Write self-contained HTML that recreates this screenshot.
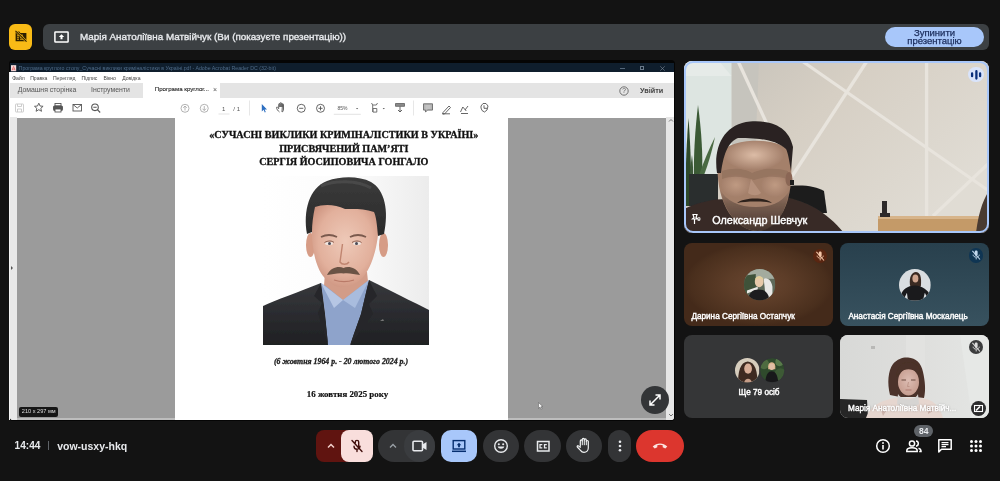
<!DOCTYPE html>
<html><head><meta charset="utf-8">
<style>
*{margin:0;padding:0;box-sizing:border-box}
html,body{width:1000px;height:481px;overflow:hidden;background:#131313;font-family:"Liberation Sans",sans-serif;position:relative}
.abs{position:absolute}
.nw{white-space:nowrap}
#ybox{left:9px;top:23.6px;width:23.3px;height:26.2px;background:#f9bb16;border-radius:6px}
#topbar{left:42.8px;top:24px;width:946.5px;height:25.5px;background:#3c4043;border-radius:6px}
#toptext{left:80px;top:31.3px;font-size:9.85px;color:#e8eaed;font-weight:normal;-webkit-text-stroke:0.35px #e8eaed;line-height:12px}
#stopbtn{left:885px;top:27px;width:99px;height:20px;background:#a8c7fa;border-radius:10px;color:#1b2d5c;-webkit-text-stroke:0.25px #1b2d5c;font-size:9.5px;line-height:8.6px;text-align:center;padding-top:1.5px}
#pdf{left:10px;top:61px;width:664px;height:359px;background:#fff;overflow:hidden;border-radius:0 0 3px 3px}
#pframe{left:8.5px;top:60.2px;width:666.5px;height:361px;background:#050505;border-radius:4px}
#ptitle{left:0;top:2.4px;width:664px;height:8.7px;background:#0f1e2d}
#ptabs{left:0;top:22px;width:664px;height:15px;background:#e4e4e4}
#ptool{left:0;top:37px;width:664px;height:19.5px;background:#fff}
#pgray{left:7px;top:56.5px;width:649px;height:303px;background:#9b9b9b}
#page{left:165px;top:56.5px;width:333px;height:303px;background:#fff}
#lstrip{left:0;top:56px;width:7px;height:303px;background:#e8e8e8}
#rstrip{left:656px;top:56px;width:8px;height:303px;background:#e6e6e6}
.tile{position:absolute;border-radius:8px;overflow:hidden}
#t1{left:684px;top:61px;width:305px;height:172px;background:#d9d6cf}
#t1b{left:684px;top:61px;width:305px;height:172px;border:2px solid #a8c7fa;border-radius:9px}
#t2{left:684px;top:243px;width:149px;height:83px;background:radial-gradient(ellipse closest-side at 50% 50%,#684530 0%,#5d3d28 40%,#4a2f1d 90%,#442a1a 100%)}
#t3{left:840px;top:243px;width:149px;height:83px;background:linear-gradient(#28404d,#38525f)}
#t4{left:684px;top:334.5px;width:149px;height:83px;background:#353637}
#t5{left:840px;top:334.5px;width:149px;height:83px;background:#dcdcda}
.bbtn{position:absolute;top:430px;height:32px;border-radius:16px;background:#333436}
.name{position:absolute;color:#fff;font-weight:normal;-webkit-text-stroke:0.4px #fff;white-space:nowrap}
.menu span{position:absolute;top:0;font-size:5.1px;color:#444}
svg{position:absolute;overflow:visible}
#root{position:absolute;left:0;top:0;width:1000px;height:481px;will-change:transform;overflow:hidden}
</style></head><body><div id="root">
<div class="abs" id="ybox"></div>
<svg style="left:14.5px;top:29.5px" width="12" height="12" viewBox="0 0 12 12">
  <path d="M0.6 1.6h3.6l1.2 1.3h6v8.4H0.6z" fill="#2b1f00"/>
  <path d="M2 5.2h2M5 5.2h3M2 7.2h2M5 7.2h3.5M2 9.2h2M5 9.2h3.5" stroke="#f9bb16" stroke-width="0.9"/>
  <path d="M0.5 0.8L11.5 11.6" stroke="#f9bb16" stroke-width="2.2"/>
  <path d="M0.5 0.8L11.5 11.6" stroke="#2b1f00" stroke-width="1.1"/>
</svg>
<div class="abs" id="topbar"></div>
<svg style="left:53.5px;top:30.5px" width="15" height="12" viewBox="0 0 15 12">
  <rect x="0.9" y="0.9" width="13.2" height="10.2" fill="none" stroke="#fff" stroke-width="1.5" rx="0.6"/>
  <path d="M7.5 3.2L10.2 6H8.5v2.3h-2V6H4.8z" fill="#fff"/>
</svg>
<div class="abs nw" id="toptext">Марія Анатоліївна Матвійчук (Ви (показуєте презентацію))</div>
<div class="abs nw" id="stopbtn">Зупинити<br>презентацію</div>

<div class="abs" id="pframe"></div>
<div class="abs" style="left:9px;top:72px;width:1px;height:348px;background:#f4f4f4"></div>
<div class="abs" id="pdf">
  <div class="abs" style="left:0;top:0;width:664px;height:2.4px;background:#050505"></div>
  <div class="abs" id="ptitle"></div>
  <svg style="left:0.8px;top:3.8px" width="5.2" height="6.4" viewBox="0 0 6 7"><rect width="6" height="7" fill="#f4dcdc"/><path d="M1.2 6L3 1.5L4.8 6M1.5 4.6h3" stroke="#d33" stroke-width="0.6" fill="none"/></svg>
  <div class="abs nw" style="left:8.6px;top:4px;font-size:5.28px;color:#4f6b88;line-height:6px">Програма круглого столу_Сучасні виклики криміналістики в Україні.pdf - Adobe Acrobat Reader DC (32-bit)</div>
  <div class="abs" style="left:609.5px;top:7px;width:5px;height:0.6px;background:#55677a"></div>
  <div class="abs" style="left:629.7px;top:4.8px;width:4.4px;height:4.4px;border:0.6px solid #6a7a8b"></div>
  <svg style="left:650px;top:4.5px" width="5" height="5" viewBox="0 0 5 5"><path d="M0.3 0.3L4.7 4.7M4.7 0.3L0.3 4.7" stroke="#7d8a98" stroke-width="0.6"/></svg>
  <div class="abs menu" style="left:0;top:13.5px;width:664px;height:7px">
    <span style="left:2.2px">Файл</span><span style="left:20.2px">Правка</span><span style="left:42.9px">Перегляд</span><span style="left:71.5px">Підпис</span><span style="left:93.5px">Вікно</span><span style="left:112.2px">Довідка</span>
  </div>
  <div class="abs" id="ptabs"></div>
  <div class="abs" style="left:133px;top:22px;width:77px;height:15px;background:#fff"></div>
  <div class="abs nw" style="left:7.7px;top:23.8px;font-size:6.9px;color:#555;line-height:9px">Домашня сторінка</div>
  <div class="abs nw" style="left:81px;top:23.8px;font-size:6.9px;color:#555;line-height:9px">Інструменти</div>
  <div class="abs nw" style="left:144.8px;top:24.3px;font-size:6.1px;color:#222;-webkit-text-stroke:0.1px #222;line-height:8px">Програма круглог...</div>
  <div class="abs nw" style="left:203px;top:25px;font-size:7px;color:#555;line-height:8px">×</div>
  <svg style="left:608.5px;top:24.7px" width="10" height="10" viewBox="0 0 10 10"><circle cx="5" cy="5" r="4.2" fill="none" stroke="#555" stroke-width="0.8"/><text x="5" y="7.3" font-size="6.5" text-anchor="middle" fill="#555" font-family="Liberation Sans">?</text></svg>
  <div class="abs nw" style="left:630px;top:25.5px;font-size:7.25px;color:#444;font-weight:bold;line-height:8px">Увійти</div>
  <div class="abs" id="ptool"></div>
  <!-- toolbar icons -->
  <svg style="left:0;top:36.8px" width="664" height="20" viewBox="0 0 664 20">
    <g fill="none" stroke-width="0.9">
      <g stroke="#c8c8c8"><rect x="5.5" y="6" width="8" height="8" rx="0.5"/><path d="M7.5 6v2.5h4V6M7.5 14v-3h4v3"/></g>
      <path d="M28.8 5.2l1.3 2.8 3 .3-2.3 2 .7 3-2.7-1.6-2.7 1.6.7-3-2.3-2 3-.3z" stroke="#555"/>
      <g stroke="#555"><rect x="43.5" y="8" width="9" height="4.5" rx="0.8" fill="#555"/><rect x="45" y="5.5" width="6" height="2.5"/><rect x="45" y="11" width="6" height="3" fill="#fff"/></g>
      <g stroke="#555"><rect x="63" y="6.5" width="8.5" height="6.5"/><path d="M63 6.5l4.25 3.5 4.25-3.5"/></g>
      <g stroke="#555" stroke-width="1.1"><circle cx="85" cy="9.3" r="3.3"/><path d="M87.4 11.7l2.8 2.8M83.3 9.3h3.4"/></g>
      <g stroke="#aaa"><circle cx="175" cy="10.3" r="4"/><path d="M175 12.5v-4.5M173.2 9.8l1.8-1.8 1.8 1.8"/></g>
      <g stroke="#aaa"><circle cx="194.25" cy="10.3" r="4"/><path d="M194.25 8v4.5M192.45 10.7l1.8 1.8 1.8-1.8"/></g>
      <path d="M208.5 16h11" stroke="#e0e0e0"/>
      <path d="M239.5 2.5v15M403.5 2.5v15" stroke="#e4e4e4"/>
    </g>
    <text x="212" y="12.5" font-size="6" fill="#555" font-family="Liberation Sans">1</text>
    <text x="223.3" y="12.5" font-size="6" fill="#555" font-family="Liberation Sans">/ 1</text>
    <path d="M251.8 6v7.5l1.8-1.7 1.2 2.6 1-.45-1.2-2.5h2.4z" fill="#2d6fc1"/>
    <g fill="none" stroke="#555" stroke-width="0.9">
      <path d="M269.5 14c-1.5-1-3-3-3-4.5 0-.6.9-.6 1.3 0l.9 1.2V6.3c0-.9 1.2-.9 1.2 0V9M269.9 9V5.4c0-.9 1.2-.9 1.2 0V9M271.1 9V5.8c0-.9 1.2-.9 1.2 0V9M272.3 9V6.5c0-.9 1.2-.9 1.2 0v4.5c0 2-1 3-1.5 3z"/>
      <circle cx="291.25" cy="10.3" r="4"/><path d="M289.2 10.3h4.1"/>
      <circle cx="310.5" cy="10.3" r="4"/><path d="M308.4 10.3h4.2M310.5 8.2v4.2"/>
      <path d="M323.8 16.3h27" stroke="#e0e0e0"/>
      <path d="M361.5 5l1.2 2h3.6l1.2-2M362.7 7v7M363 10.5h3.8v3.6H363z" stroke="#666"/>
      <path d="M385.5 5.5h9v2.8h-9z" fill="#8a8a8a" stroke="#6a6a6a"/><path d="M390 8.5v5.5M388 12l2 2 2-2"/>
      <path d="M413.5 5.8h9v6.3h-5l-2 2v-2h-2z" fill="#b5b5b5" stroke="#6a6a6a"/><path d="M415.5 8h5M415.5 10h5" stroke="#e0e0e0" stroke-width="0.6"/>
      <path d="M433 14.5l6-6.5 1.5 1.5-6 6.5h-1.5zM432 15.8h8" />
      <path d="M450.5 14l2.3-5 3.5 4M451 15.5h7M455 12l3-4" />
      <path d="M471 8l2-2.5h3l2 2.5-1 4-2.5 2-2.5-1.5-1-2.5zM474 7.3v3h3"/>
    </g>
    <text x="327.5" y="12.3" font-size="5" fill="#555" font-family="Liberation Sans">85%</text>
    <path d="M346 10h2.2l-1.1 1.2z" fill="#555"/>
    <path d="M372.7 10h2.2l-1.1 1.2z" fill="#555"/>
  </svg>
  <div class="abs" id="lstrip"></div>
  <div class="abs" id="pgray"></div>
  <div class="abs" id="page"></div>
  <div class="abs" id="rstrip"></div>
  <div class="abs" style="left:7px;top:357px;width:158px;height:1.5px;background:#bdbdbd"></div>
  <div class="abs" style="left:498px;top:357px;width:158px;height:1.5px;background:#bdbdbd"></div>
  <div class="abs" style="left:1px;top:205px;width:0;height:0;border-left:2.5px solid #555;border-top:2.5px solid transparent;border-bottom:2.5px solid transparent"></div>
  <div class="abs nw" style="left:9.4px;top:345.9px;height:9.7px;width:38.7px;background:#161616;border-radius:2px;color:#ddd;font-size:5.6px;line-height:9.7px;text-align:center">210 x 297 мм</div>
  <svg style="left:657px;top:56px" width="8" height="303" viewBox="0 0 8 303"><path d="M2 4.5l2-2 2 2M2 297l2 2 2-2" fill="none" stroke="#555" stroke-width="0.8"/></svg>
  <!-- page content -->
  <div class="abs nw" style="left:165px;top:67.45px;width:333px;text-align:center;font-family:'Liberation Serif',serif;font-weight:bold;font-size:10.15px;line-height:13.1px;color:#111;-webkit-text-stroke:0.3px #111;padding-left:4.6px">«СУЧАСНІ ВИКЛИКИ КРИМІНАЛІСТИКИ В УКРАЇНІ»<br>ПРИСВЯЧЕНИЙ ПАМ’ЯТІ<br>СЕРГІЯ ЙОСИПОВИЧА ГОНГАЛО</div>
  <div class="abs nw" style="left:162.7px;top:295.5px;width:333px;text-align:center;font-family:'Liberation Serif',serif;font-weight:bold;font-style:italic;font-size:7.85px;line-height:10px;color:#222;-webkit-text-stroke:0.3px #222;padding-left:3.6px">(6 жовтня 1964 р. - 20 лютого 2024 р.)</div>
  <div class="abs nw" style="left:165px;top:328px;width:333px;text-align:center;font-family:'Liberation Serif',serif;font-weight:bold;font-size:8.9px;line-height:10px;color:#111;-webkit-text-stroke:0.2px #111;padding-left:12px">16 жовтня 2025 року</div>
  <svg class="abs" id="photo" style="left:253px;top:114.5px" width="166" height="169" viewBox="0 0 166 169">
    <filter id="bl2" x="-5%" y="-5%" width="110%" height="110%"><feGaussianBlur stdDeviation="0.6"/></filter>
    <g filter="url(#bl2)">
    <defs>
      <linearGradient id="pbg" x1="0" x2="1" y1="0" y2="0"><stop offset="0" stop-color="#ffffff"/><stop offset="0.55" stop-color="#fbfbfb"/><stop offset="1" stop-color="#ececec"/></linearGradient>
      <radialGradient id="face" cx="0.5" cy="0.45" r="0.62"><stop offset="0" stop-color="#eec9b8"/><stop offset="0.65" stop-color="#e2b09c"/><stop offset="1" stop-color="#c98f7b"/></radialGradient>
      <linearGradient id="suit" x1="0" x2="0" y1="0" y2="1"><stop offset="0" stop-color="#37383c"/><stop offset="1" stop-color="#1f2023"/></linearGradient>
      <linearGradient id="hairg" x1="0" x2="0" y1="0" y2="1"><stop offset="0" stop-color="#3b3b3b"/><stop offset="1" stop-color="#2a2a2a"/></linearGradient>
    </defs>
    <rect width="166" height="169" fill="url(#pbg)"/>
    <path d="M62 96 L104 96 L107 124 L60 124 Z" fill="#d29c88"/>
    <path d="M0 130 C12 124 36 116 58 107 L66 169 L0 169 Z" fill="url(#suit)"/>
    <path d="M166 134 C150 126 126 114 106 104 L87 169 L166 169 Z" fill="url(#suit)"/>
    <path d="M58 107 L64 111 L80 124 L97 111 L106 104 L98 138 L87 169 L65 169 L62 138 Z" fill="#8ea3cb"/>
    <path d="M58 107 L71 132 L80 124 Z" fill="#b6c6e4"/>
    <path d="M106 104 L92 132 L80 124 Z" fill="#a9bcde"/>
    <path d="M58 107 L51 120 L59 127 L55 137 L65 169 L62 138 Z" fill="#26272a"/>
    <path d="M106 104 L114 120 L106 128 L110 138 L87 169 L98 138 Z" fill="#26272a"/>
    <path d="M117 145 l3 -2 l1 2 z" fill="#777"/>
    <ellipse cx="47.5" cy="69" rx="4.5" ry="12" fill="#d69c86"/>
    <ellipse cx="120.5" cy="69" rx="4.5" ry="12" fill="#d69c86"/>
    <path d="M50 30 C47 55 49 85 60 100 C68 109 74 112 80 111 C87 111 94 108 101 100 C112 86 117 60 116 34 C100 30 70 26 50 30 Z" fill="url(#face)"/>
    <path d="M44 58 C40 35 46 12 64 5 C78 0 96 0 108 6 C122 14 126 35 121 58 L115 60 C114 48 113 40 111 36 C100 32 88 33 82 33 C72 28 60 28 52 31 C50 40 49 48 49 56 Z" fill="url(#hairg)"/>
    <path d="M58 10 C72 4 94 4 108 12" stroke="#5a5a5a" stroke-width="3" fill="none" opacity="0.45"/>
    <path d="M58 61 C63 58.5 69 58.5 74 61 M87 61 C92 58.5 98 58.5 103 61" stroke="#7a5a4e" stroke-width="1.8" fill="none"/>
    <ellipse cx="66" cy="67.5" rx="4" ry="1.7" fill="#f0e6e0"/><ellipse cx="94" cy="67.5" rx="4" ry="1.7" fill="#f0e6e0"/><circle cx="66.5" cy="67.5" r="1.5" fill="#4a4a55"/><circle cx="93.5" cy="67.5" r="1.5" fill="#4a4a55"/><path d="M61.5 66.5 C65 64.5 69 64.5 71 66.5 M89 66.5 C92 64.5 96 64.5 98.5 66.5" stroke="#8a5e50" stroke-width="1" fill="none"/>
    <path d="M79.5 68 L77 86 C79 89 84 89 86 86" stroke="#c08570" stroke-width="1.4" fill="none"/>
    <path d="M64 99 C68 91 76 90 80.5 92 C85 90 93 91 97 99 C91 98 85 96.5 80.5 97.5 C76 96.5 70 98 64 99 Z" fill="#6a5244"/>
    <path d="M71 104 C77 106 85 106 91 104" stroke="#b97a68" stroke-width="1.1" fill="none"/>
  </g>
  </svg>
</div>
<svg style="left:538px;top:402px" width="6" height="8" viewBox="0 0 6 8"><path d="M0.5 0.5v6l1.5-1.4 1.1 2.3 1-.5-1.1-2.2h2z" fill="#f4f4f4" stroke="#555" stroke-width="0.5"/></svg>
<div class="abs" style="left:641px;top:386px;width:28px;height:28px;border-radius:50%;background:#333537"></div>
<svg style="left:647px;top:392px" width="16" height="16" viewBox="0 0 16 16"><path d="M3 13L13 3M8.5 3H13v4.5M3 8.5V13h4.5" stroke="#fff" stroke-width="1.5" fill="none"/></svg>

<div class="tile" id="t1"><svg style="left:0;top:0" width="305" height="172" viewBox="0 0 305 172">
  <filter id="bl1" x="-5%" y="-5%" width="110%" height="110%"><feGaussianBlur stdDeviation="0.6"/></filter>
  <g filter="url(#bl1)">
  <defs>
    <linearGradient id="wall" x1="0" y1="0" x2="1" y2="0.6"><stop offset="0" stop-color="#c4c0b8"/><stop offset="0.45" stop-color="#d6cfc4"/><stop offset="1" stop-color="#e0dcd4"/></linearGradient>
    <radialGradient id="mface" cx="0.5" cy="0.35" r="0.6"><stop offset="0" stop-color="#b58f78"/><stop offset="0.6" stop-color="#9a735f"/><stop offset="1" stop-color="#6f5245"/></radialGradient>
  </defs>
  <rect width="305" height="172" fill="url(#wall)"/>
  <path d="M47.5 0 L75 0 L70 120 L47.5 120 Z" fill="#c6c4bd"/>
  <path d="M0 0 L47.5 0 L47.5 118 L0 118 Z" fill="#dde5e1"/>
  <path d="M0 0 L35 0 L47.5 15 L0 15 Z" fill="#e6ebe8"/>
  <g stroke="#e8e4dd" stroke-width="3.3" fill="none">
    <path d="M54 0 L100 100"/>
    <path d="M118 0 L305 130"/>
    <path d="M183 0 L105 120"/>
    <path d="M242.6 0 L242.6 155"/>
    <path d="M305 102 L249 155"/>
  </g>
  <!-- plant -->
  <path d="M2 145 C1 120 2 90 4.5 57 C7 90 7.5 120 7 145 Z" fill="#2f4a2c"/>
  <path d="M10 114 C9.5 95 11 70 14 44 C17.5 70 19 95 18 114 Z" fill="#3a5a35"/>
  <path d="M15 114 C20 100 25 88 31 76 C28 90 24 104 20 114 Z" fill="#4a6a42"/>
  <path d="M5 120 C6 112 7 100 8 94 C9 102 9.5 112 9 120 Z" fill="#3c5838"/>
  <path d="M5 113 L34 113 L34 145 L5 145 Z" fill="#2b2d2e"/>
  <!-- desk -->
  <path d="M194 155 L305 155 L305 172 L194 172 Z" fill="#c49a68"/>
  <path d="M194 155 L305 155 L305 158 L194 158 Z" fill="#d7b48a"/>
  <rect x="198" y="140" width="5" height="15" fill="#2e2b2a"/>
  <rect x="196" y="152" width="10" height="4" fill="#2e2b2a"/>
  <path d="M292 172 L305 172 L305 130 C298 140 294 155 292 172 Z" fill="#4a3a32"/>
  <!-- chair right -->
  <path d="M100 126 C115 123 132 125 140 130 L143 152 L100 152 Z" fill="#1e1e1f"/>
  <!-- body -->
  <path d="M0 148 C15 141 30 138 42 138 L100 136 C122 140 142 150 160 172 L0 172 Z" fill="#382c27"/>
  <!-- face -->
  <defs>
    <radialGradient id="fh" cx="0.5" cy="0.5" r="0.5"><stop offset="0" stop-color="#dcbca6" stop-opacity="1"/><stop offset="1" stop-color="#dcbca6" stop-opacity="0"/></radialGradient>
    <radialGradient id="ck" cx="0.5" cy="0.5" r="0.5"><stop offset="0" stop-color="#c29d85" stop-opacity="0.9"/><stop offset="1" stop-color="#c29d85" stop-opacity="0"/></radialGradient>
    <linearGradient id="brd" x1="0" x2="0" y1="0" y2="1"><stop offset="0" stop-color="#5a463c" stop-opacity="0"/><stop offset="0.35" stop-color="#5a463c" stop-opacity="0.6"/><stop offset="1" stop-color="#3e302a" stop-opacity="0.95"/></linearGradient>
  </defs>
  <path d="M34 96 C32 118 36 138 45 152 C53 163 63 170 74 170 C88 169 99 156 104 138 C108 124 108 106 106 92 C100 76 42 74 34 96 Z" fill="#a4806b"/>
  <ellipse cx="70" cy="94" rx="30" ry="15" fill="url(#fh)"/>
  <ellipse cx="52" cy="124" rx="15" ry="12" fill="url(#ck)"/>
  <ellipse cx="91" cy="124" rx="14" ry="12" fill="url(#ck)"/>
  <path d="M38 110 C50 106 62 108 68 112 C76 108 90 106 104 110 L104 118 C90 114 78 116 70 119 C62 116 48 114 38 118 Z" fill="#8a6a58" opacity="0.55"/>
  <path d="M67 118 L64 132 C68 135 74 135 77 132 Z" fill="#b99580" opacity="0.8"/>
  <path d="M36 128 C40 150 55 170 74 170 C92 170 102 150 106 128 C100 140 90 146 72 146 C55 146 42 140 36 128 Z" fill="url(#brd)"/>
  <path d="M53 142 C60 136 82 136 88 142 C80 140 62 140 53 142 Z" fill="#2e221d"/>
  <ellipse cx="105" cy="118" rx="3.5" ry="7" fill="#8a6654"/>
  <!-- hair -->
  <path d="M33 112 C29 86 40 63 66 60.5 C88 59 105 66 109 86 L107 110 C105 98 104 92 102 88 C92 79 76 77 54 77 C45 81 40 90 37 112 Z" fill="#2a2422"/>
  <rect x="106" y="119" width="4" height="5" fill="#1a1a1a"/>
</g>
</svg></div>
<div class="abs" id="t1b"></div>
<svg style="left:690px;top:212px" width="14" height="14" viewBox="0 0 14 14"><path d="M3 2.5h4l-1 3 1.5 1.5h-5l1.5-1.5zM4.5 7v5" stroke="#fff" stroke-width="1.2" fill="none"/><text x="7.2" y="8.5" font-size="6" fill="#fff" font-family="Liberation Sans" font-weight="bold">9</text></svg>
<div class="name" style="left:712.3px;top:214.2px;font-size:10.8px;line-height:12px">Олександр Шевчук</div>
<div class="abs" style="left:968.4px;top:66.9px;width:15.6px;height:15.6px;border-radius:50%;background:#d9e4fb"></div>
<svg style="left:968.4px;top:66.9px" width="15.6" height="15.6" viewBox="0 0 15.6 15.6"><path d="M4.1 6.4v2.8M8.4 4.2v7.4M12.1 6.4v2.8" stroke="#0b2f7a" stroke-width="2.3" stroke-linecap="round"/></svg>
<div class="tile" id="t2"></div>
<svg style="left:743.5px;top:269px" width="31.4" height="31.4" viewBox="0 0 32 32">
  <defs><clipPath id="c2"><circle cx="16" cy="16" r="16"/></clipPath></defs>
  <g clip-path="url(#c2)">
    <rect width="32" height="32" fill="#5f6a5a"/>
    <rect x="0" y="0" width="32" height="10" fill="#a3ab9e"/>
    <path d="M0 7 L12 5 L12 22 L0 26 Z" fill="#3f5239"/>
    <path d="M20 10 C24 8 28 12 29 18 L29 30 L22 30 L21 18 Z" fill="#e8e8e6"/>
    <path d="M3 22 L14 18 L14 21 L3 25 Z" fill="#e9e9e4"/>
    <ellipse cx="15.5" cy="13" rx="4.5" ry="5.5" fill="#e6c9a9"/>
    <path d="M11 12 C11 6 20 6 20 12 C19 9 12 9 11 12 Z" fill="#e3cf9b"/>
    <path d="M4 32 C5 24 9 21 15 21 C21 21 25 24 26 32 Z" fill="#1c1c1e"/>
  </g>
</svg>
<div class="abs" style="left:812.6px;top:248.8px;width:14.4px;height:14.4px;border-radius:50%;background:#5a2611"></div>
<svg style="left:812.6px;top:248.8px" width="14.4" height="14.4" viewBox="0 0 14 14"><path d="M5.6 3.6c0-1.6 2.8-1.6 2.8 0v2.8c0 1.6-2.8 1.6-2.8 0z" fill="#f3c6a8"/><path d="M4 6.5c0 3.2 6 3.2 6 0M7 9.3v1.8" stroke="#f3c6a8" stroke-width="0.9" fill="none"/><path d="M3.3 2.8l7.4 8.4" stroke="#f3c6a8" stroke-width="1"/></svg>
<div class="name" style="left:691.4px;top:312.4px;font-size:8.2px;line-height:10px">Дарина Сергіївна Остапчук</div>

<div class="tile" id="t3"></div>
<svg style="left:899.1px;top:268.6px" width="31.8" height="31.8" viewBox="0 0 32 32">
  <defs><clipPath id="c3"><circle cx="16" cy="16" r="16"/></clipPath></defs>
  <g clip-path="url(#c3)">
    <rect width="32" height="32" fill="#d9dde0"/>
    <path d="M11 16 C10 8 13 3 17 3 C21 3 23 8 22 17 L20 20 L13 20 Z" fill="#3a2a22"/>
    <ellipse cx="16.5" cy="9.5" rx="3" ry="4" fill="#cfa58e"/>
    <path d="M2 26 C4 20 8 17 16 16.5 C24 17 29 21 32 27 L28 28 L26 24 L24 32 L9 32 L8 24 L5 30 Z" fill="#1a1a1c"/>
  </g>
</svg>
<div class="abs" style="left:968.6px;top:248.4px;width:14.4px;height:14.4px;border-radius:50%;background:#0f3553"></div>
<svg style="left:968.6px;top:248.4px" width="14.4" height="14.4" viewBox="0 0 14 14"><path d="M5.6 3.6c0-1.6 2.8-1.6 2.8 0v2.8c0 1.6-2.8 1.6-2.8 0z" fill="#c2d8ee"/><path d="M4 6.5c0 3.2 6 3.2 6 0M7 9.3v1.8" stroke="#c2d8ee" stroke-width="0.9" fill="none"/><path d="M3.3 2.8l7.4 8.4" stroke="#c2d8ee" stroke-width="1"/></svg>
<div class="name" style="left:848.4px;top:312.4px;font-size:8.2px;line-height:10px">Анастасія Сергіївна Москалець</div>

<div class="tile" id="t4"></div>

<svg style="left:734.5px;top:357.7px" width="24.5" height="24.5" viewBox="0 0 24 24">
  <defs><clipPath id="c4a"><circle cx="12" cy="12" r="12"/></clipPath></defs>
  <g clip-path="url(#c4a)">
    <rect width="24" height="24" fill="#d6cdbd"/>
    <path d="M3 24 C3 14 5 4 12.5 3.5 C20 4 22 14 22 24 Z" fill="#3e2a21"/>
    <ellipse cx="12.8" cy="10.5" rx="3.8" ry="5" fill="#d8ae98"/>
    <path d="M9 24 C9.5 19 16 19 16.5 24 Z" fill="#c59d88"/>
  </g>
</svg>
<svg style="left:759.5px;top:357.7px" width="24.5" height="24.5" viewBox="0 0 24 24">
  <defs><clipPath id="c4b"><circle cx="12" cy="12" r="12"/></clipPath></defs>
  <g clip-path="url(#c4b)">
    <rect width="24" height="24" fill="#2f4a2c"/>
    <circle cx="4" cy="6" r="5" fill="#4e6b40"/><circle cx="20" cy="16" r="6" fill="#3d5a35"/><circle cx="19" cy="4" r="4" fill="#587a4a"/>
    <path d="M8 8 C8 3 15 3 15 8 L15 11 L8 11 Z" fill="#d9b48a"/>
    <ellipse cx="11.5" cy="8.5" rx="2.6" ry="3.2" fill="#e2bfa5"/>
    <path d="M5 24 C6 16 8 13 11.5 13 C15 13 17 16 18 24 Z" fill="#18181a"/>
  </g>
  <circle cx="12" cy="12" r="12.3" fill="none" stroke="#343538" stroke-width="0.8"/>
</svg>
<div class="name" style="left:738.5px;top:388px;font-size:8.2px;line-height:10px">Ще 79 осіб</div>

<div class="tile" id="t5"><svg style="left:0;top:0" width="149" height="83" viewBox="0 0 149 83">
  <filter id="bl5" x="-5%" y="-5%" width="110%" height="110%"><feGaussianBlur stdDeviation="0.55"/></filter>
  <g filter="url(#bl5)">
  <defs><linearGradient id="w5" x1="0" x2="1"><stop offset="0" stop-color="#d8d9d7"/><stop offset="0.5" stop-color="#dededc"/><stop offset="1" stop-color="#e4e6e4"/></linearGradient>
  <radialGradient id="f5" cx="0.5" cy="0.45" r="0.6"><stop offset="0" stop-color="#dcbcb2"/><stop offset="1" stop-color="#c49a8c"/></radialGradient></defs>
  <rect width="149" height="83" fill="url(#w5)"/>
  <rect x="66" y="0" width="19" height="83" fill="#e2e2e0"/>
  <path d="M120 0 L149 0 L149 83 L132 83 Z" fill="#e6e8e6"/>
  <rect x="31" y="11" width="4" height="3" fill="#b8b8b6"/>
  <path d="M0 64 L27 65 L28 83 L0 83 Z" fill="#262626"/>
  <path d="M50 60 C47 48 48 36 53 29 C58 23 64 22 68 22.5 C76 23 81 28 83 37 C85 46 86 55 84 63 L76 62 L60 62 Z" fill="#4b3129"/>
  <ellipse cx="68.5" cy="47" rx="10.5" ry="13.5" fill="url(#f5)"/>
  <path d="M56 42 C57 32 62 27 69 27 C76 27 80 32 80.5 40 C76 35 70 33 64 35 C60 37 58 39 56 42 Z" fill="#4b3129"/>
  <path d="M61.5 45 h4.5 M71 45 h4.5" stroke="#6a4a40" stroke-width="1.2"/><path d="M65.5 55 h6" stroke="#b07a70" stroke-width="1"/><path d="M68.5 47 l-1 4.5 h2" stroke="#b58a7c" stroke-width="0.7" fill="none"/>
  <path d="M26 83 C30 70 44 64 58 63 L80 63 C94 64 100 72 103 83 Z" fill="#e6d6cf"/>
  <path d="M40 72 l6 4 l-3 5 z M88 70 l5 6 l-5 3 z" fill="#cdb3aa"/>
  <path d="M58 59 C62 66 75 66 78 59 L79 69 C74 73 62 73 57 69 Z" fill="#d6d4d2"/>
</g>
</svg></div>
<div class="abs" style="left:968.6px;top:339.7px;width:14.4px;height:14.4px;border-radius:50%;background:#3b3c3d"></div>
<svg style="left:968.6px;top:339.7px" width="14.4" height="14.4" viewBox="0 0 14 14"><path d="M5.6 3.6c0-1.6 2.8-1.6 2.8 0v2.8c0 1.6-2.8 1.6-2.8 0z" fill="#ddd"/><path d="M4 6.5c0 3.2 6 3.2 6 0M7 9.3v1.8" stroke="#ddd" stroke-width="0.9" fill="none"/><path d="M3.3 2.8l7.4 8.4" stroke="#ddd" stroke-width="1"/></svg>
<div class="abs" style="left:971px;top:400.5px;width:15px;height:15px;border-radius:50%;background:#2b2b2c"></div>
<svg style="left:971px;top:400.5px" width="15" height="15" viewBox="0 0 15 15"><rect x="3.5" y="4.5" width="8" height="6" fill="none" stroke="#fff" stroke-width="1.1"/><path d="M5 9.5l4-4" stroke="#fff" stroke-width="1.6"/></svg>
<div class="name" style="left:848px;top:404px;font-size:8.2px;line-height:10px;text-shadow:0 0 2px rgba(0,0,0,.55)">Марія Анатоліївна Матвійч...</div>

<div class="abs nw" style="left:14.6px;top:440.2px;font-size:10.1px;color:#e8eaed;font-weight:bold;line-height:12px">14:44</div>
<div class="abs" style="left:48px;top:441px;width:1px;height:9px;background:#5f6368"></div>
<div class="abs nw" style="left:57.2px;top:440.2px;font-size:10.5px;color:#e8eaed;font-weight:bold;line-height:12px">vow-usxy-hkq</div>

<div class="bbtn" style="left:316px;width:40px;background:#601410;border-radius:8px"></div>
<div class="bbtn" style="left:341px;width:32px;background:#f9dedc;border-radius:8px"></div>
<svg style="left:324.8px;top:441px" width="12" height="10" viewBox="0 0 12 10"><path d="M3 6.5L6 3.5L9 6.5" stroke="#f2d0cc" stroke-width="1.5" fill="none"/></svg>
<svg style="left:349px;top:438px" width="16" height="16" viewBox="0 0 16 16"><path d="M6.3 5V4c0-2.2 3.4-2.2 3.4 0v4.2M5 8.2c0 1.8 1.4 3 3 3 .5 0 1-.1 1.4-.4M11 8.2c0 .4-.1.8-.2 1.1M8 11.2V13.5M3 2.5l10 11" stroke="#410e0b" stroke-width="1.4" fill="none" stroke-linecap="round"/></svg>
<div class="bbtn" style="left:378px;width:57px"></div>
<div class="bbtn" style="left:404px;width:31px;background:#3a3c3f"></div>
<svg style="left:387px;top:441px" width="12" height="10" viewBox="0 0 12 10"><path d="M3 6.5L6 3.5L9 6.5" stroke="#9aa0a6" stroke-width="1.3" fill="none"/></svg>
<svg style="left:411px;top:438px" width="18" height="16" viewBox="0 0 18 16"><rect x="2" y="3.3" width="9.5" height="9.4" rx="1" stroke="#e8eaed" stroke-width="1.6" fill="none"/><path d="M11.5 6.5L15.5 4v8l-4-2.5z" fill="#e8eaed"/></svg>
<div class="bbtn" style="left:441px;width:36px;background:#a8c7fa;border-radius:10px"></div>
<svg style="left:451px;top:438px" width="16" height="16" viewBox="0 0 16 16"><rect x="2.2" y="2.6" width="11.6" height="8.4" stroke="#062e6f" stroke-width="1.4" fill="none"/><path d="M1 13.3h14" stroke="#062e6f" stroke-width="1.5"/><path d="M8 4.8L10.3 7.2H8.9v2H7.1v-2H5.7z" fill="#062e6f"/></svg>
<div class="bbtn" style="left:483px;width:36px"></div>
<svg style="left:493px;top:438px" width="16" height="16" viewBox="0 0 16 16"><circle cx="8" cy="8" r="6.3" stroke="#e8eaed" stroke-width="1.4" fill="none"/><circle cx="5.8" cy="6.3" r="1.05" fill="#e8eaed"/><circle cx="10.2" cy="6.3" r="1.05" fill="#e8eaed"/><path d="M4.7 8.6c.6 2.9 6 2.9 6.6 0z" fill="#e8eaed"/></svg>
<div class="bbtn" style="left:524px;width:37px"></div>
<svg style="left:534.5px;top:438px" width="16" height="16" viewBox="0 0 16 16"><rect x="2.5" y="3.5" width="11.5" height="9.5" stroke="#e8eaed" stroke-width="1.5" fill="none"/><path d="M7.3 6.6H5v3.3h2.3M11.8 6.6H9.5v3.3h2.3" stroke="#e8eaed" stroke-width="1.3" fill="none"/></svg>
<div class="bbtn" style="left:566px;width:36px"></div>
<svg style="left:575px;top:437px" width="17" height="17" viewBox="0 0 17 17"><path d="M5.3 9.3V3.9a1 1 0 0 1 2 0V2.4a1 1 0 0 1 2 0v.5a1 1 0 0 1 2 0v1.6a1 1 0 0 1 2 0V11c0 2.3-1.8 4.3-4.3 4.3-1.6 0-2.7-.7-3.5-1.9L2.3 10c-.5-.8.4-1.6 1.1-1.1l1.9 1.5" stroke="#f1f3f4" stroke-width="1.2" fill="none" stroke-linejoin="round" stroke-linecap="round"/><path d="M7.3 3.9V8.2M9.3 2.9V8.2M11.3 4.5V8.2" stroke="#f1f3f4" stroke-width="1" fill="none"/></svg>
<div class="bbtn" style="left:608px;width:23px"></div>
<svg style="left:611.5px;top:438px" width="16" height="16" viewBox="0 0 16 16"><circle cx="8" cy="3.8" r="1.3" fill="#e8eaed"/><circle cx="8" cy="8" r="1.3" fill="#e8eaed"/><circle cx="8" cy="12.2" r="1.3" fill="#e8eaed"/></svg>
<div class="bbtn" style="left:636px;width:48px;background:#dc362e"></div>
<svg style="left:651px;top:439px" width="18" height="14" viewBox="0 0 18 14"><path d="M1.7 7.5c4-4 10.6-4 14.6 0l-2 2.1-2.6-1.3V6.3c-1.9-.7-3.5-.7-5.4 0v2l-2.6 1.3z" fill="#fbe3e0"/></svg>

<svg style="left:875px;top:438px" width="16" height="16" viewBox="0 0 16 16"><circle cx="8" cy="8" r="6.3" stroke="#fff" stroke-width="1.5" fill="none"/><path d="M8 7v4.5" stroke="#fff" stroke-width="1.6"/><circle cx="8" cy="5" r="0.95" fill="#fff"/></svg>
<div class="abs" style="left:914px;top:425.2px;width:19.3px;height:12px;border-radius:6px;background:#5f6368"></div>
<div class="abs nw" style="left:914px;top:426.8px;width:19.3px;text-align:center;font-size:8.5px;line-height:9px;color:#e8eaed;font-weight:bold">84</div>
<svg style="left:905px;top:438px" width="18" height="16" viewBox="0 0 18 16"><circle cx="7" cy="5.5" r="2.6" stroke="#fff" stroke-width="1.5" fill="none"/><path d="M1.8 12.8c0-1.8 2.2-3 5.2-3s5.2 1.2 5.2 3v.8H1.8z" stroke="#fff" stroke-width="1.5" fill="none"/><path d="M11 3c1.5.2 2.3 1.3 2.3 2.5S12.5 8 11 8.2M13.5 10.2c1.6.5 2.5 1.4 2.5 2.6v.8h-1.8" stroke="#fff" stroke-width="1.5" fill="none"/></svg>
<svg style="left:937px;top:438px" width="16" height="16" viewBox="0 0 16 16"><path d="M1.8 1.8h12.4v9.4H4.5l-2.7 2.7z" stroke="#fff" stroke-width="1.5" fill="none" stroke-linejoin="round"/><path d="M4.5 4.6h7M4.5 6.6h7M4.5 8.6h4.5" stroke="#fff" stroke-width="1.3"/></svg>
<svg style="left:969px;top:439px" width="14" height="14" viewBox="0 0 14 14"><g fill="#fff"><circle cx="2.5" cy="2.5" r="1.5"/><circle cx="7" cy="2.5" r="1.5"/><circle cx="11.5" cy="2.5" r="1.5"/><circle cx="2.5" cy="7" r="1.5"/><circle cx="7" cy="7" r="1.5"/><circle cx="11.5" cy="7" r="1.5"/><circle cx="2.5" cy="11.5" r="1.5"/><circle cx="7" cy="11.5" r="1.5"/><circle cx="11.5" cy="11.5" r="1.5"/></g></svg>
</div></body></html>
